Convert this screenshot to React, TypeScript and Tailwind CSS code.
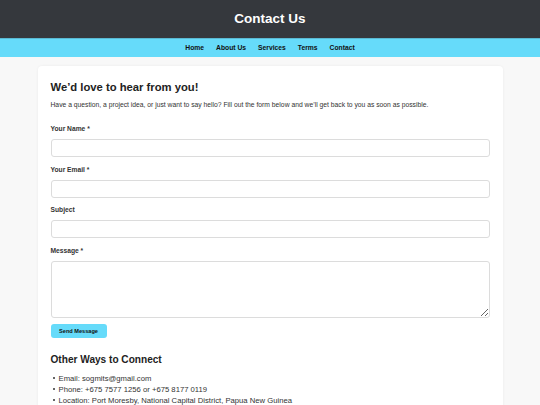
import React from "react";

const font = { fontFamily: '"Liberation Sans", Arial, sans-serif' };

function Field({ label, textarea }: { label: string; textarea?: boolean }) {
  return (
    <div className="mb-[7.5px]">
      <label className="block text-[6.7px] leading-[9px] font-bold text-[#333] mb-[6px]">{label}</label>
      {textarea ? (
        <textarea className="block w-full h-[57px] border border-[#dcdcdc] rounded-[3px] bg-white resize-y outline-none" />
      ) : (
        <input className="block w-full h-[18px] border border-[#dcdcdc] rounded-[3px] bg-white outline-none" />
      )}
    </div>
  );
}

export default function App() {
  const items = [
    "Email: sogmits@gmail.com",
    "Phone: +675 7577 1256 or +675 8177 0119",
    "Location: Port Moresby, National Capital District, Papua New Guinea",
  ];
  return (
    <div style={font} className="min-h-[405px] bg-[#f8f8f8] text-[#333]">
      <header className="h-[38px] bg-[#35383d] flex items-center justify-center">
        <h1 className="text-white font-bold text-[13.5px] leading-none">Contact Us</h1>
      </header>
      <nav className="h-[19px] bg-[#66dbfa] flex items-center justify-center gap-[12px] border-t border-[#5ab9d3]">
        {["Home", "About Us", "Services", "Terms", "Contact"].map((t) => (
          <a key={t} className="text-[6.75px] font-bold text-[#111] leading-none">{t}</a>
        ))}
      </nav>
      <main className="w-[465px] mx-auto mt-[9px] bg-white rounded-[4px] shadow-[0_0_3px_rgba(0,0,0,0.06)] px-[13px] pt-[15px] pb-[20px]">
        <h2 className="text-[11.25px] leading-[13px] font-bold text-[#222]">We’d love to hear from you!</h2>
        <p className="mt-[5px] text-[6.75px] leading-[11px] text-[#333] mb-[14px]">
          Have a question, a project idea, or just want to say hello? Fill out the form below and we’ll get back to you as soon as possible.
        </p>
        <Field label="Your Name *" />
        <Field label="Your Email *" />
        <Field label="Subject" />
        <Field label="Message *" textarea />
        <button className="block mt-[-1px] w-[56px] h-[14px] bg-[#66dbfa] rounded-[3px] text-[5.6px] font-bold text-[#111]">
          Send Message
        </button>
        <h3 className="mt-[16px] text-[10.1px] leading-[12px] font-bold text-[#222]">Other Ways to Connect</h3>
        <ul className="mt-[6.5px] text-[7.7px] leading-[11px] text-[#333]">
          {items.map((t) => (
            <li key={t} className="flex items-center pl-[2px]">
              <span className="w-[2.5px] h-[2.5px] rounded-full bg-[#333] mr-[3.5px] shrink-0" />
              <span>{t}</span>
            </li>
          ))}
        </ul>
      </main>
    </div>
  );
}
